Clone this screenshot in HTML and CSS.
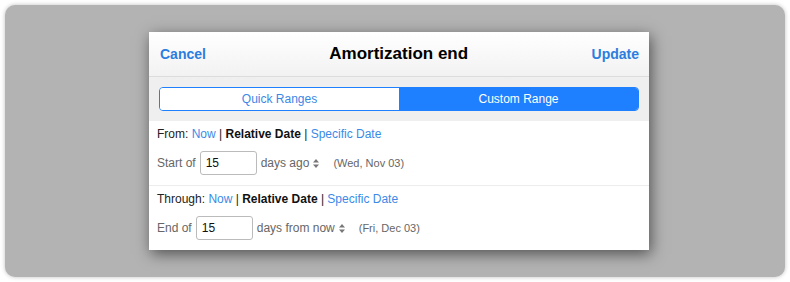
FILE: index.html
```html
<!DOCTYPE html>
<html lang="en">
<head>
  <meta charset="UTF-8">
  <title>Amortization end</title>
  <link rel="stylesheet" href="styles.css">
</head>
<body>
  <div class="backdrop">
    <div class="dialog">
      <div class="header">
        <a class="header-btn">Cancel</a>
        <h1>Amortization end</h1>
        <a class="header-btn">Update</a>
      </div>

      <div class="tabs-bar">
        <div class="segmented">
          <div class="segment">Quick Ranges</div>
          <div class="segment active">Custom Range</div>
        </div>
      </div>

      <div class="section">
        <div class="mode-line">
          From: <a class="link">Now</a> | <b>Relative Date</b> | <a class="link">Specific Date</a>
        </div>
        <div class="input-row">
          <span class="label">Start of</span>
          <input class="num" type="text" value="15">
          <span class="unit">days ago
            <svg class="updown" width="6" height="9" viewBox="0 0 6 9"><path d="M3 0 L6 3.5 H0 Z M3 9 L6 5.5 H0 Z" fill="#777"/></svg>
          </span>
          <span class="date">(Wed, Nov 03)</span>
        </div>
      </div>

      <div class="section">
        <div class="mode-line">
          Through: <a class="link">Now</a> | <b>Relative Date</b> | <a class="link">Specific Date</a>
        </div>
        <div class="input-row">
          <span class="label">End of</span>
          <input class="num" type="text" value="15">
          <span class="unit">days from now
            <svg class="updown" width="6" height="9" viewBox="0 0 6 9"><path d="M3 0 L6 3.5 H0 Z M3 9 L6 5.5 H0 Z" fill="#777"/></svg>
          </span>
          <span class="date">(Fri, Dec 03)</span>
        </div>
      </div>
    </div>
  </div>
</body>
</html>
```

FILE: styles.css
```css
body {
  margin: 0;
  padding: 5px;
  background: #fff;
  font-family: "Liberation Sans", Arial, sans-serif;
  color: #222;
}
.backdrop {
  height: 272px;
  background-color: #b3b3b3;
  border-radius: 10px;
  box-shadow: 0 0 4px rgba(0, 0, 0, 0.25);
  padding: 27px 0 0 144px;
  box-sizing: border-box;
}
.dialog {
  width: 500px;
  background: #fff;
  box-shadow: 2px 4px 14px rgba(0, 0, 0, 0.55);
}
.header {
  height: 45px;
  display: flex;
  align-items: center;
  justify-content: space-between;
  padding: 0 10px 0 11px;
  background: linear-gradient(#ffffff, #f2f2f2);
  border-bottom: 1px solid #dcdcdc;
  box-sizing: border-box;
}
.header h1 {
  margin: 0;
  font-size: 17px;
  font-weight: bold;
  color: #000;
}
.header-btn {
  font-size: 14px;
  font-weight: bold;
  color: #2b7de0;
}
.tabs-bar {
  background-color: #efeff0;
  padding: 10px;
}
.segmented {
  display: flex;
  height: 24px;
  border: 1px solid #1f80ff;
  border-radius: 4px;
  overflow: hidden;
  box-sizing: border-box;
}
.segment {
  flex: 1;
  display: flex;
  align-items: center;
  justify-content: center;
  font-size: 12px;
  color: #3a87e6;
  background: #fff;
}
.segment.active {
  background-color: #1f80ff;
  color: #fff;
}
.section {
  padding: 5px 8px 10px;
  border-bottom: 1px solid #ececec;
}
.section:last-child {
  border-bottom: none;
}
.mode-line {
  font-size: 12px;
  line-height: 16px;
  color: #222;
}
.mode-line b {
  color: #111;
}
.link {
  color: #3a8ae8;
}
.input-row {
  display: flex;
  align-items: center;
  margin-top: 9px;
  height: 24px;
  font-size: 12px;
  color: #666;
}
.label {
  margin-right: 4px;
}
.num {
  width: 57px;
  height: 24px;
  box-sizing: border-box;
  border: 1px solid #bbb;
  border-radius: 3px;
  padding: 0 5px;
  font-family: inherit;
  font-size: 12px;
  color: #111;
  margin: 0 4px 0 0;
}
.unit {
  display: flex;
  align-items: center;
}
.updown {
  margin-left: 4px;
}
.date {
  margin-left: 14px;
  font-size: 11px;
  color: #666;
}
```
